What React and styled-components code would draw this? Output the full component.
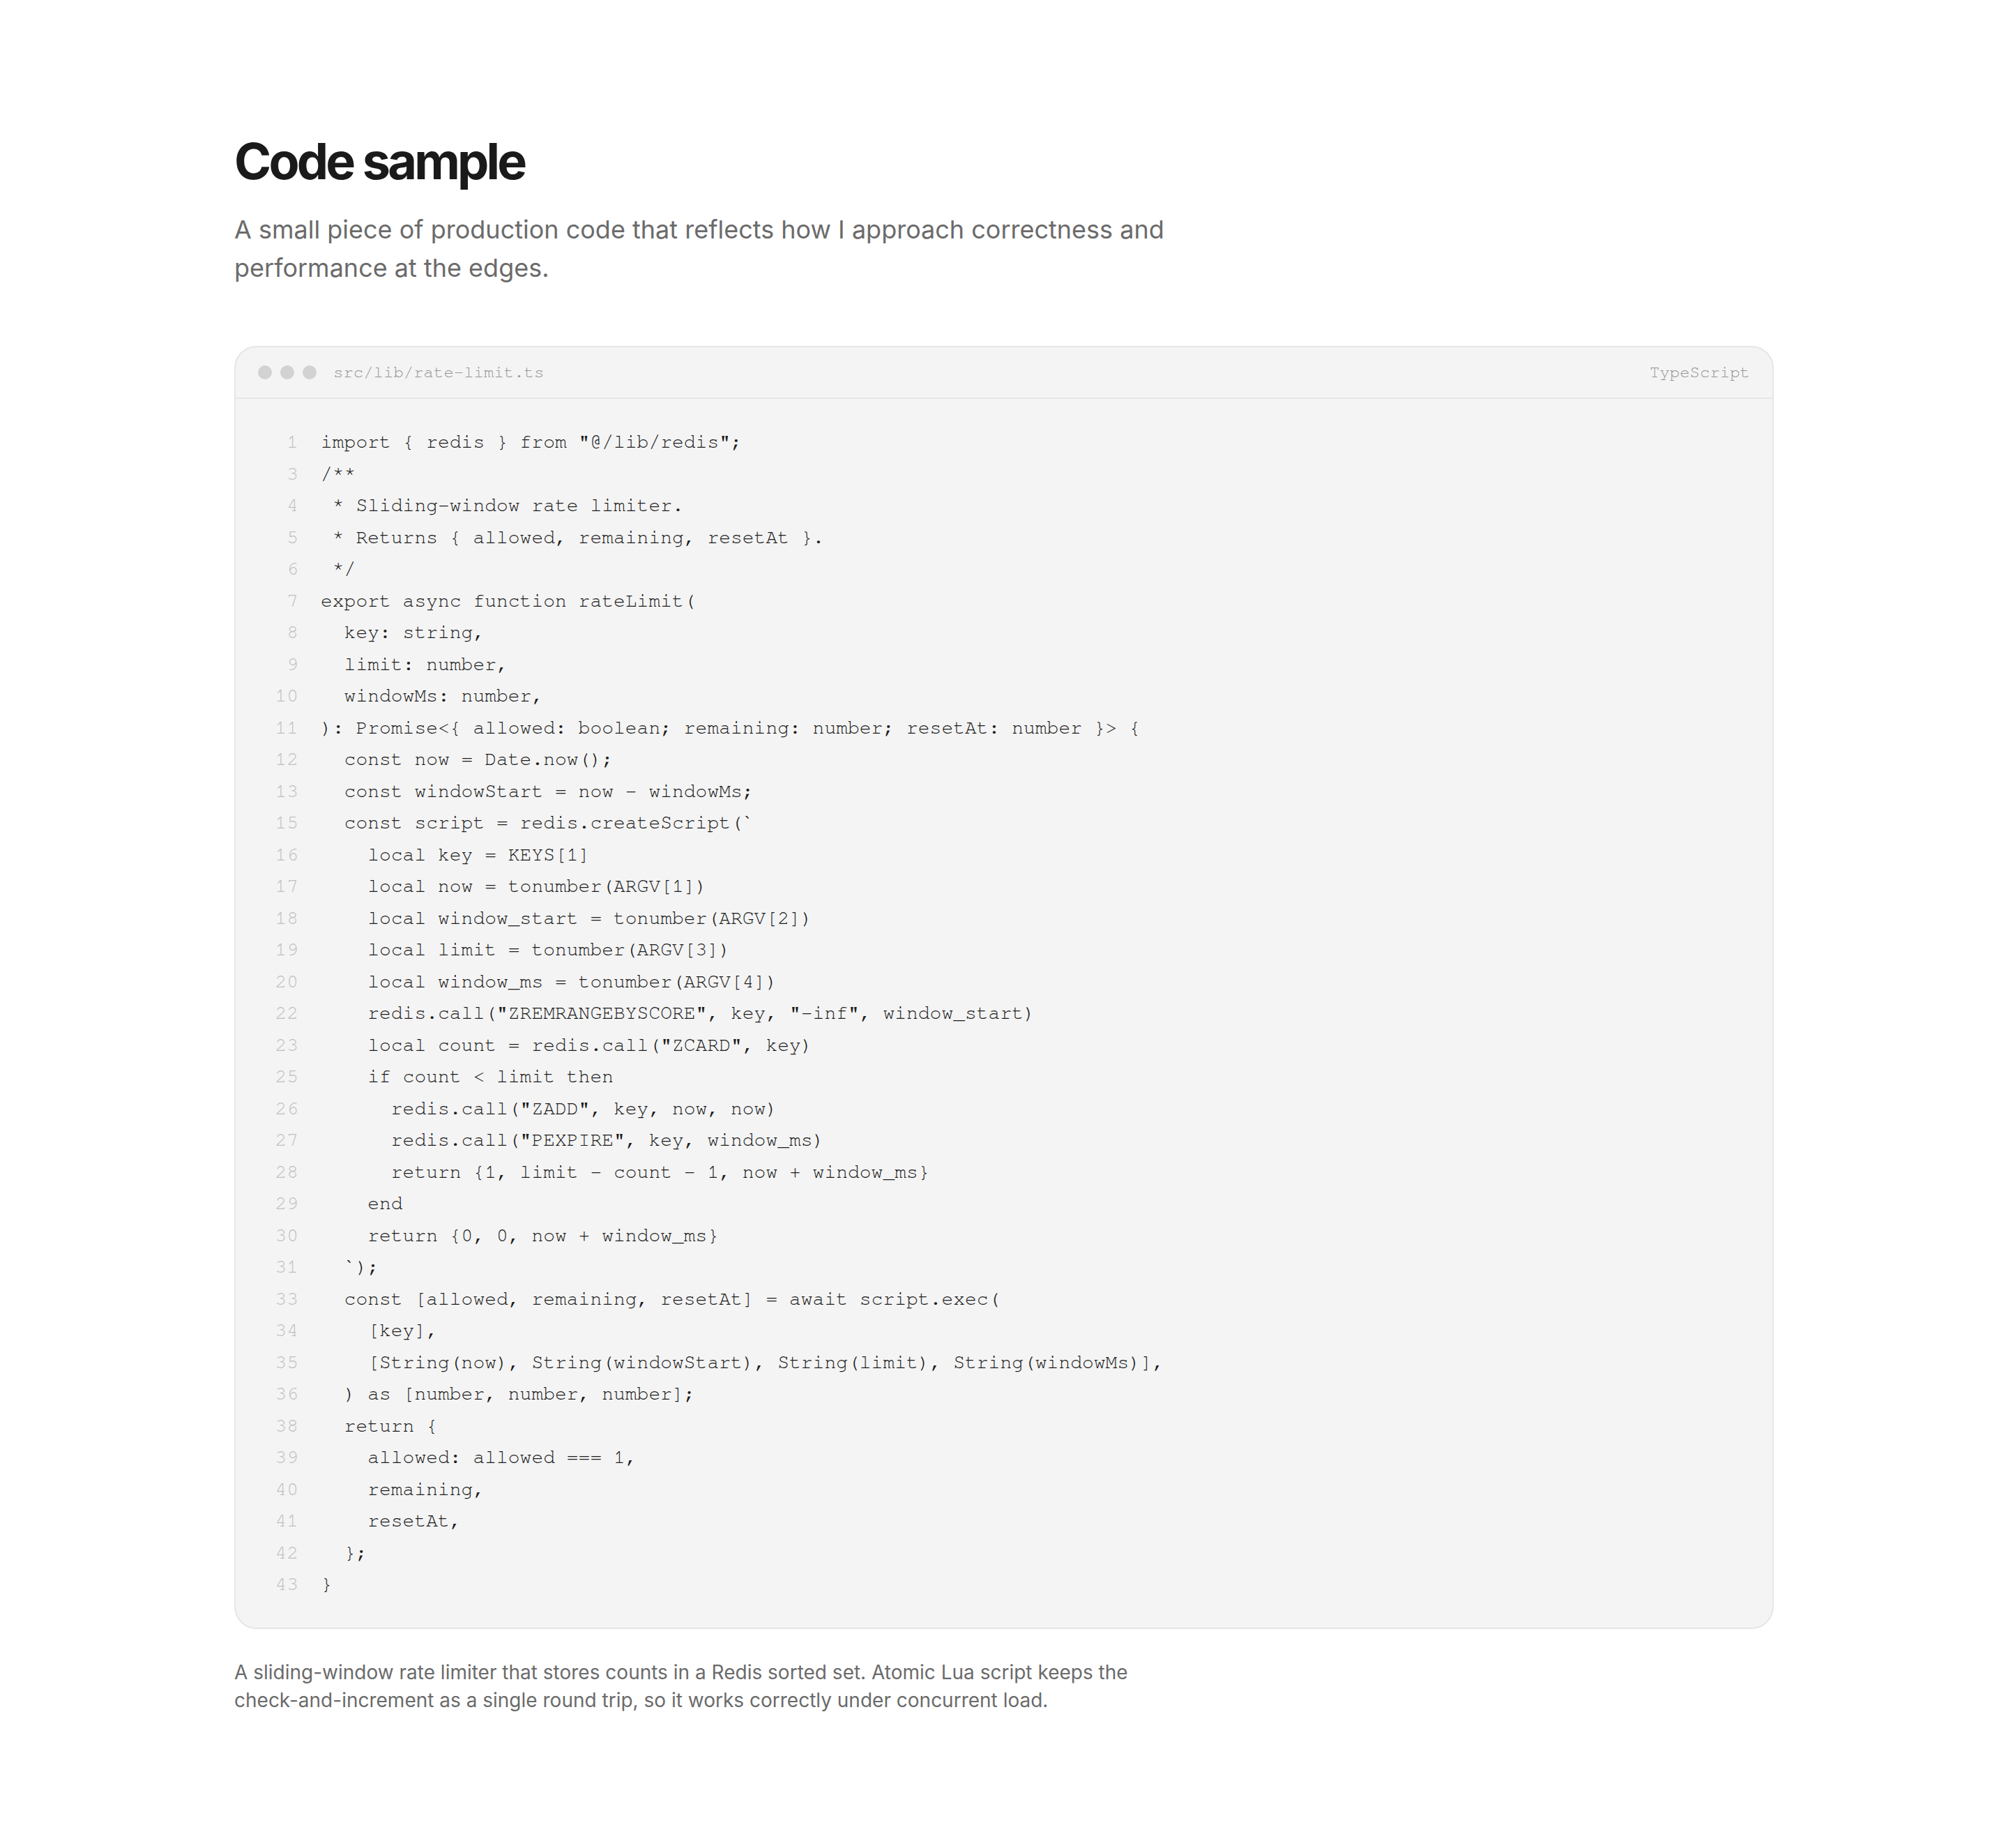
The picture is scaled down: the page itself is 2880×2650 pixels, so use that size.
import React from "react";
import styled, { createGlobalStyle } from "styled-components";

const GlobalStyle = createGlobalStyle`
  html, body {
    margin: 0;
    padding: 0;
    background: #ffffff;
  }
  body {
    font-family: Inter, "Noto Sans", sans-serif;
    -webkit-font-smoothing: antialiased;
  }
`;

const mono = `"Nimbus Mono PS", "Nimbus Mono L", FreeMono, Courier, "Liberation Mono", monospace`;

const Page = styled.main`
  padding: 191px 0 200px;
`;

const Section = styled.section`
  width: 2208px;
  margin: 0 auto;
`;

const Title = styled.h1`
  margin: 0;
  font-size: 72px;
  line-height: 1.1;
  font-weight: 700;
  letter-spacing: -0.053em;
  color: #1a1a1a;
`;

const Lead = styled.p`
  margin: 32px 0 0;
  max-width: 1344px;
  font-size: 36px;
  line-height: 55px;
  color: #6b6b6b;
`;

const Card = styled.div`
  margin-top: 84px;
  border: 2px solid #e6e6e6;
  border-radius: 32px;
  background: #f4f4f4;
  overflow: hidden;
`;

const CardHeader = styled.div`
  height: 72px;
  padding: 0 32px;
  display: flex;
  align-items: center;
  border-bottom: 2px solid #e6e6e6;
  font-family: ${mono};
  font-size: 24px;
  color: #959595;
`;

const Dots = styled.div`
  display: flex;
  gap: 12px;
`;

const Dot = styled.span`
  width: 20px;
  height: 20px;
  border-radius: 50%;
  background: #d2d2d2;
`;

const FileName = styled.span`
  margin-left: 24px;
  flex: 1;
`;

const Lang = styled.span``;

const CodeBody = styled.pre`
  margin: 0;
  padding: 40px 32px 38px;
  font-family: ${mono};
  font-size: 28px;
  line-height: 45.5px;
  color: #1c1c1c;
`;

const Line = styled.div`
  display: flex;
`;

const LineNo = styled.span`
  width: 58px;
  flex: none;
  text-align: right;
  margin-right: 32px;
  color: #c0c0c0;
  user-select: none;
`;

const LineText = styled.span`
  white-space: pre;
`;

const Caption = styled.p`
  margin: 42px 0 0;
  max-width: 1310px;
  font-size: 28px;
  line-height: 40px;
  color: #6b6b6b;
`;

const lines = [
  [1, 'import { redis } from "@/lib/redis";'],
  [3, "/**"],
  [4, " * Sliding-window rate limiter."],
  [5, " * Returns { allowed, remaining, resetAt }."],
  [6, " */"],
  [7, "export async function rateLimit("],
  [8, "  key: string,"],
  [9, "  limit: number,"],
  [10, "  windowMs: number,"],
  [11, "): Promise<{ allowed: boolean; remaining: number; resetAt: number }> {"],
  [12, "  const now = Date.now();"],
  [13, "  const windowStart = now - windowMs;"],
  [15, "  const script = redis.createScript(`"],
  [16, "    local key = KEYS[1]"],
  [17, "    local now = tonumber(ARGV[1])"],
  [18, "    local window_start = tonumber(ARGV[2])"],
  [19, "    local limit = tonumber(ARGV[3])"],
  [20, "    local window_ms = tonumber(ARGV[4])"],
  [22, '    redis.call("ZREMRANGEBYSCORE", key, "-inf", window_start)'],
  [23, '    local count = redis.call("ZCARD", key)'],
  [25, "    if count < limit then"],
  [26, '      redis.call("ZADD", key, now, now)'],
  [27, '      redis.call("PEXPIRE", key, window_ms)'],
  [28, "      return {1, limit - count - 1, now + window_ms}"],
  [29, "    end"],
  [30, "    return {0, 0, now + window_ms}"],
  [31, "  `);"],
  [33, "  const [allowed, remaining, resetAt] = await script.exec("],
  [34, "    [key],"],
  [35, "    [String(now), String(windowStart), String(limit), String(windowMs)],"],
  [36, "  ) as [number, number, number];"],
  [38, "  return {"],
  [39, "    allowed: allowed === 1,"],
  [40, "    remaining,"],
  [41, "    resetAt,"],
  [42, "  };"],
  [43, "}"],
];

const App = () => {
  return (
    <Page>
      <GlobalStyle />
      <Section>
        <Title>Code sample</Title>
        <Lead>
          A small piece of production code that reflects how I approach
          correctness and performance at the edges.
        </Lead>

        <Card>
          <CardHeader>
            <Dots>
              <Dot />
              <Dot />
              <Dot />
            </Dots>
            <FileName>src/lib/rate-limit.ts</FileName>
            <Lang>TypeScript</Lang>
          </CardHeader>
          <CodeBody>
            {lines.map(([n, text]) => (
              <Line key={n}>
                <LineNo>{n}</LineNo>
                <LineText>{text}</LineText>
              </Line>
            ))}
          </CodeBody>
        </Card>

        <Caption>
          A sliding-window rate limiter that stores counts in a Redis sorted
          set. Atomic Lua script keeps the check-and-increment as a single
          round trip, so it works correctly under concurrent load.
        </Caption>
      </Section>
    </Page>
  );
};

export default App;
